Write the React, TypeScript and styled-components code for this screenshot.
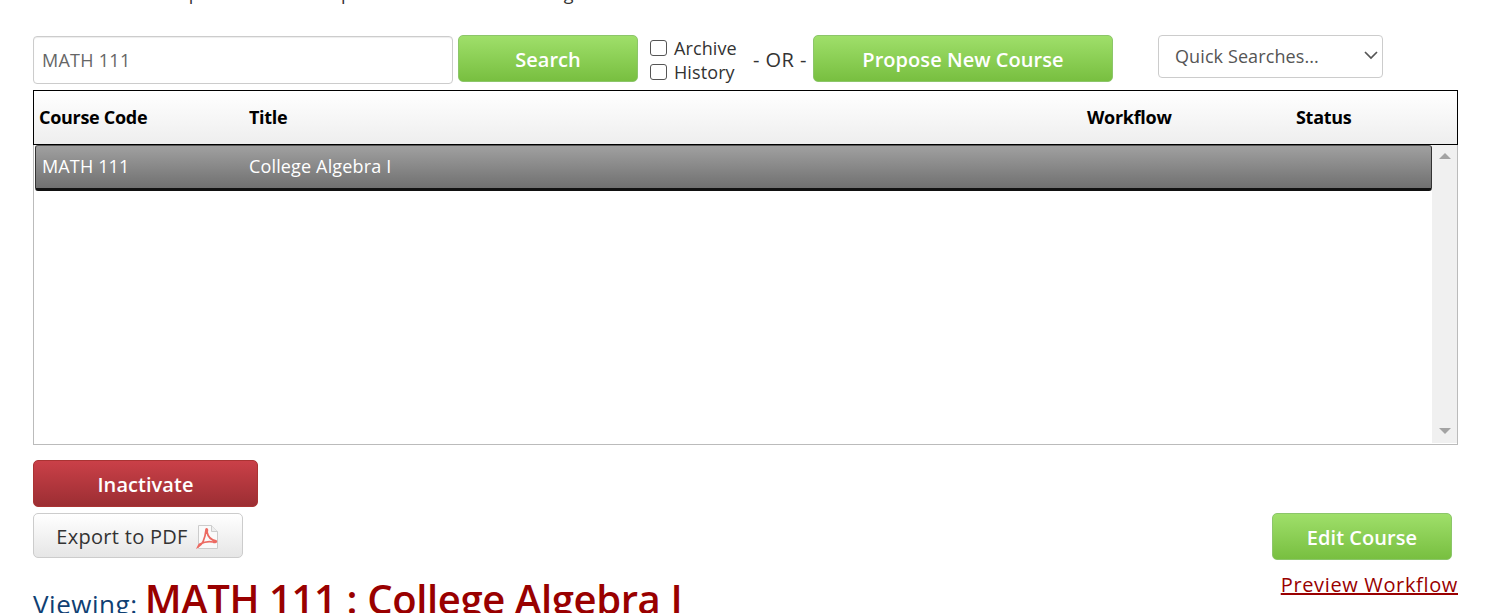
import styled, { createGlobalStyle } from 'styled-components'

const GlobalStyle = createGlobalStyle`
  html, body {
    margin: 0;
    padding: 0;
    background: #fff;
    overflow: hidden;
  }
  body {
    font-family: "Open Sans", "Liberation Sans", sans-serif;
    color: #333;
  }
`

const Page = styled.div`
  width: 1494px;
  height: 613px;
  overflow: hidden;
  padding: 0 36px 0 33px;
  box-sizing: border-box;
`

const IntroClip = styled.div`
  height: 35px;
  overflow: hidden;
`

const IntroText = styled.p`
  margin: -19px 0 0;
  font-size: 18px;
  line-height: 24px;
  color: #333;
  white-space: nowrap;
`

const Toolbar = styled.div`
  display: flex;
  align-items: flex-start;
  height: 55px;
`

const SearchInput = styled.input`
  width: 420px;
  height: 48px;
  margin-top: 1px;
  padding: 0 8px;
  box-sizing: border-box;
  border: 1px solid #ccc;
  border-radius: 4px;
  font: 18px "Open Sans", sans-serif;
  letter-spacing: 0.27px;
  color: #666;
  box-shadow: inset 0 1px 1px rgba(0, 0, 0, 0.075);
  outline: none;
`

const ActionButton = styled.button<{ $tone?: 'green' | 'red'; $width: number }>`
  width: ${p => p.$width}px;
  height: 47px;
  box-sizing: border-box;
  border: 1px solid ${p => (p.$tone === 'red' ? '#a33' : '#8cc66a')};
  border-radius: 5px;
  background: ${p =>
    p.$tone === 'red'
      ? 'linear-gradient(#ca4048, #9c2e33)'
      : 'linear-gradient(#9fdf6a, #78bf40)'};
  color: #fff;
  font: 600 20px "Open Sans", sans-serif;
  letter-spacing: 0.05px;
  padding: 2px 0 0;
`

const SearchButton = styled(ActionButton)`
  margin-left: 5px;
`

const CheckStack = styled.div`
  display: flex;
  flex-direction: column;
  margin-left: 12px;
  width: 103px;
  padding-top: 1px;
`

const CheckRow = styled.label`
  display: flex;
  align-items: center;
  height: 24px;
  font-size: 18px;
  letter-spacing: 0.1px;
  color: #333;
`

const CheckBox = styled.span`
  width: 17px;
  height: 16px;
  margin-right: 7px;
  box-sizing: border-box;
  border: 1px solid #555;
  border-radius: 3px;
  background: #fff;
`

const OrText = styled.span`
  width: 60px;
  padding-top: 1px;
  line-height: 47px;
  font-size: 20px;
  letter-spacing: 0.45px;
  color: #333;
  white-space: nowrap;
`

const QuickSelect = styled.div`
  width: 225px;
  height: 43px;
  margin-left: 45px;
  padding: 0 4px 2px 16px;
  box-sizing: border-box;
  display: flex;
  align-items: center;
  justify-content: space-between;
  border: 1px solid #ccc;
  border-radius: 4px;
  font-size: 18px;
  letter-spacing: 0.1px;
  color: #555;
`

const Grid = styled.div`
  width: 1425px;
  height: 355px;
  box-sizing: border-box;
  border: 1px solid #bbb;
  border-top: none;
  display: flex;
  flex-direction: column;
`

const HeaderRow = styled.div`
  margin-right: -1px;
  margin-left: -1px;
  height: 55px;
  box-sizing: border-box;
  border: 1px solid #000;
  background: linear-gradient(#fff, #eee);
  display: grid;
  grid-template-columns: 210px 838px 209px 1fr;
  align-items: center;
  padding: 0 0 2px 5px;
  font-size: 18px;
  font-weight: 700;
  letter-spacing: -0.3px;
  color: #000;
`

const GridBody = styled.div`
  flex: 1;
  display: flex;
  min-height: 0;
`

const RowList = styled.div`
  flex: 1;
  padding-left: 1px;
`

const SelectedRow = styled.div`
  height: 46px;
  box-sizing: border-box;
  border: 1px solid #333;
  border-top-color: #555;
  border-bottom: 3px solid #111;
  border-radius: 3px;
  background: linear-gradient(#a0a0a0, #707070);
  display: grid;
  grid-template-columns: 207px 1fr;
  align-items: center;
  padding: 0 0 3px 6px;
  color: #fff;
  font-size: 18px;
  letter-spacing: 0.15px;
`

const Scrollbar = styled.div`
  width: 25px;
  margin-bottom: 1px;
  background: #f0f0f0;
  display: flex;
  flex-direction: column;
  justify-content: space-between;
  align-items: center;
  padding: 8px 0 9px;
  box-sizing: border-box;
`

const Arrow = styled.span<{ $down?: boolean }>`
  width: 0;
  height: 0;
  border-left: 6px solid transparent;
  border-right: 6px solid transparent;
  ${p => (p.$down ? 'border-top: 6px solid #a3a3a3;' : 'border-bottom: 6px solid #a3a3a3;')}
`

const InactivateRow = styled.div`
  margin-top: 15px;
  height: 53px;
`

const FooterRow = styled.div`
  display: flex;
  justify-content: space-between;
  align-items: flex-start;
`

const LeftFooter = styled.div`
  display: flex;
  flex-direction: column;
`

const ExportButton = styled.button`
  width: 210px;
  height: 45px;
  box-sizing: border-box;
  border: 1px solid #ccc;
  border-radius: 5px;
  background: linear-gradient(#fff, #e6e6e6);
  color: #333;
  font: 20px "Open Sans", sans-serif;
  letter-spacing: 0.3px;
  display: flex;
  align-items: center;
  justify-content: center;
  gap: 8px;
  padding: 2px 0 0;
`

const ViewingLine = styled.div`
  margin-top: 16px;
  display: flex;
  align-items: baseline;
  gap: 7px;
  white-space: nowrap;
`

const ViewingLabel = styled.span`
  font-size: 26px;
  letter-spacing: 0.55px;
  color: #0f3f73;
`

const CourseTitle = styled.span`
  font-size: 40px;
  font-weight: 600;
  letter-spacing: -0.38px;
  line-height: 50px;
  color: #990000;
`

const RightFooter = styled.div`
  width: 186px;
  display: flex;
  flex-direction: column;
  align-items: flex-end;
`

const EditButton = styled(ActionButton)`
  margin-right: 6px;
`

const PreviewLink = styled.a`
  margin-top: 13px;
  font-size: 20px;
  letter-spacing: 0.65px;
  line-height: 24px;
  color: #990000;
  text-decoration: underline;
  white-space: nowrap;
`

function PdfIcon() {
  return (
    <svg width="24" height="26" viewBox="0 0 24 26">
      <path d="M2.5 1.5h13l6 6v17h-19z" fill="#fafafa" stroke="#ccc" />
      <path d="M15.5 1.5v6h6" fill="#eee" stroke="#ccc" />
      <path
        d="M2 23c4-2 7-8 8-17 .3-2 2-1 1 2 1 5 4 8 9 9 1 1-1 2-3 1-4-1-9 0-13 2-1 1-2 3-2 3z"
        fill="none"
        stroke="#ec6a62"
        strokeWidth="1.8"
      />
    </svg>
  )
}

export default function App() {
  return (
    <Page>
      <GlobalStyle />
      <IntroClip>
        <IntroText>Search course to update this file or open the courses then change it.</IntroText>
      </IntroClip>
      <Toolbar>
        <SearchInput defaultValue="MATH 111" />
        <SearchButton $width={180}>Search</SearchButton>
        <CheckStack>
          <CheckRow>
            <CheckBox />
            Archive
          </CheckRow>
          <CheckRow>
            <CheckBox />
            History
          </CheckRow>
        </CheckStack>
        <OrText>- OR -</OrText>
        <ActionButton $width={300}>Propose New Course</ActionButton>
        <QuickSelect>
          Quick Searches...
          <svg width="14" height="9" viewBox="0 0 14 9">
            <path d="M1 1l6 6 6-6" fill="none" stroke="#555" strokeWidth="1.7" />
          </svg>
        </QuickSelect>
      </Toolbar>
      <Grid>
        <HeaderRow>
          <span>Course Code</span>
          <span>Title</span>
          <span>Workflow</span>
          <span>Status</span>
        </HeaderRow>
        <GridBody>
          <RowList>
            <SelectedRow>
              <span>MATH 111</span>
              <span>College Algebra I</span>
            </SelectedRow>
          </RowList>
          <Scrollbar>
            <Arrow />
            <Arrow $down />
          </Scrollbar>
        </GridBody>
      </Grid>
      <InactivateRow>
        <ActionButton $tone="red" $width={225}>Inactivate</ActionButton>
      </InactivateRow>
      <FooterRow>
        <LeftFooter>
          <ExportButton>
            Export to PDF
            <PdfIcon />
          </ExportButton>
          <ViewingLine>
            <ViewingLabel>Viewing:</ViewingLabel>
            <CourseTitle>MATH 111 : College Algebra I</CourseTitle>
          </ViewingLine>
        </LeftFooter>
        <RightFooter>
          <EditButton $width={180}>Edit Course</EditButton>
          <PreviewLink href="#">Preview Workflow</PreviewLink>
        </RightFooter>
      </FooterRow>
    </Page>
  )
}
